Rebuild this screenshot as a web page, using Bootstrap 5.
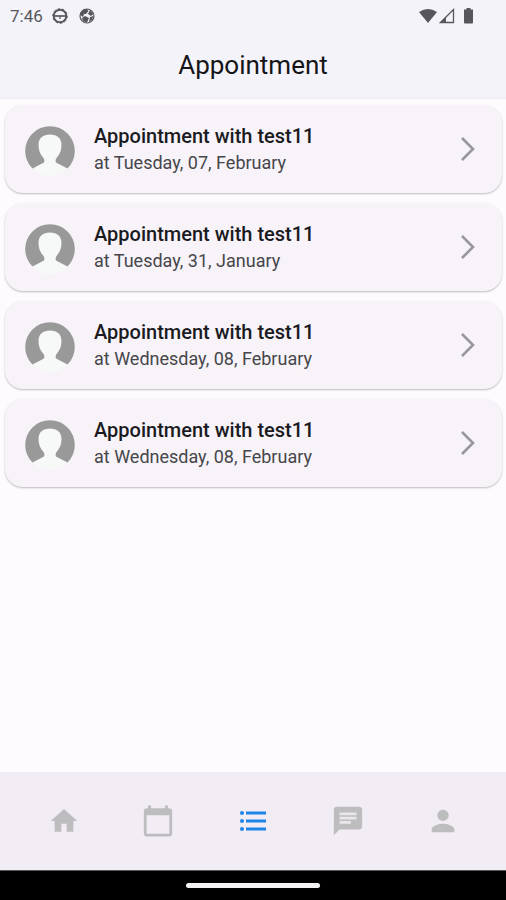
<!DOCTYPE html>
<html lang="en">
<head>
<meta charset="utf-8">
<meta name="viewport" content="width=device-width, initial-scale=1">
<title>Appointment</title>
<link href="https://cdn.jsdelivr.net/npm/bootstrap@5.3.0/dist/css/bootstrap.min.css" rel="stylesheet">
<style>
body { font-family: Roboto, "Liberation Sans", sans-serif; background: #fefbff; color: #1b1b1f; }
svg { display: block; flex: none; }
.app-header { background: #f4f3f9; border-bottom: 1px solid #f0edf2; }
.status-bar { height: 32px; padding: 0 31px 0 10px; color: #57575b; font-size: 17px; line-height: 32px; }
.app-title { font-size: 26px; line-height: 66px; font-weight: 400; color: #151518; }
.appointment-list { padding: 6px 4px 0 5px; gap: 10px; }
.appointment { min-height: 88px; padding: 0 24px 0 20px; gap: 19px; border-radius: 18px; background: #f7f3f9; color: #1b1b1f; box-shadow: 0 1px 2px rgba(0, 0, 0, .25); }
.appointment-name { font-size: 20px; line-height: 28px; font-weight: 500; }
.appointment-date { font-size: 18px; line-height: 26px; color: #46464a; }
.tab-bar { background: #f2edf4; height: 98px; padding: 0 16px 0 18px; }
.tab-bar a { color: #bdbdbf; }
.tab-bar a.active { color: #1d84ea; }
.gesture-bar { height: 30px; background: #000; border-top: 1px solid #58575a; }
.gesture-handle { width: 134px; height: 5px; border-radius: 3px; background: #f3f1f2; }
</style>
<script src="https://cdn.jsdelivr.net/npm/bootstrap@5.3.0/dist/js/bootstrap.bundle.min.js" defer></script>
</head>
<body class="d-flex flex-column min-vh-100">
<svg class="d-none" aria-hidden="true">
  <symbol id="avatar" viewBox="0 0 50 50">
    <path d="M7 42L19 34H31L43 42Q35 50 25 50Q15 50 7 42Z" fill="#f7f8f8"/>
    <ellipse cx="25" cy="22" rx="12" ry="17" fill="#f7f8f8"/>
    <path d="M7.500 42.500A24.800 24.800 0 1 1 42.500 42.500L31 36.500Q30 34 31.500 32C35 28 36.500 24 36.500 19C36.500 12 32 8.500 25 8.500S13.500 12 13.500 19C13.500 24 15 28 18.500 32Q20 34 19 36.500Z" fill="#999"/>
  </symbol>
  <symbol id="chevron" viewBox="0 0 16 26"><path d="M2 2L13 13L2 24" fill="none" stroke="#99979c" stroke-width="2.600"/></symbol>
</svg>
<header class="app-header">
  <div class="status-bar d-flex align-items-center">
    <div class="d-flex align-items-center gap-2">
      <span>7:46</span>
      <svg width="18" height="18" viewBox="0 0 18 18" fill="none" stroke="currentColor"><circle cx="9" cy="9" r="6.300" stroke-width="1.900"/><circle cx="9" cy="9" r="7.400" stroke-width=".8" stroke-dasharray="2.300 2.300"/><path d="M3 9H15" stroke-width="1.700"/><path d="M9 9V12" stroke-width="1.200"/></svg>
      <svg width="20" height="18" viewBox="0 0 20 18"><circle cx="10" cy="9" r="7" fill="#f4f3f9" stroke="currentColor" stroke-width="1.200"/><path d="M10 2L11.500 4L9 7L7 7L6 10L3 8V6L7 2ZM13 3L16.500 7L14 9L11 7ZM5 11L8 9L12 11L10 15.500L6 14ZM13 10L16.500 9L15 13L12 15Z" fill="currentColor"/></svg>
    </div>
    <div class="d-flex align-items-center ms-auto">
      <svg width="20" height="16" viewBox="0 0 20 16" fill="currentColor"><path d="M0 4Q9-2 18 4L9 15Z"/></svg>
      <svg width="16" height="16" viewBox="0 0 16 16"><path d="M1.500 14.500H14.500V1.500Z" fill="none" stroke="currentColor" stroke-width="1.300"/><path d="M1 15L7 9V15Z" fill="currentColor"/></svg>
      <svg class="ms-2" width="12" height="16" viewBox="0 0 12 16" fill="currentColor"><path d="M3.500 0H7.500V1.500H10V14.500Q10 15.500 9 15.500H2Q1 15.500 1 14.500V1.500H3.500Z"/></svg>
    </div>
  </div>
  <h1 class="app-title text-center mb-0">Appointment</h1>
</header>
<main class="appointment-list d-flex flex-column flex-grow-1">
  <a href="#" class="appointment d-flex align-items-center text-decoration-none">
    <svg class="mt-1" width="50" height="50" aria-hidden="true"><use href="#avatar"/></svg>
    <div class="flex-grow-1"><div class="appointment-name">Appointment with test11</div><div class="appointment-date">at Tuesday, 07, February</div></div>
    <svg width="20" height="26" aria-hidden="true"><use href="#chevron"/></svg>
  </a>
  <a href="#" class="appointment d-flex align-items-center text-decoration-none">
    <svg class="mt-1" width="50" height="50" aria-hidden="true"><use href="#avatar"/></svg>
    <div class="flex-grow-1"><div class="appointment-name">Appointment with test11</div><div class="appointment-date">at Tuesday, 31, January</div></div>
    <svg width="20" height="26" aria-hidden="true"><use href="#chevron"/></svg>
  </a>
  <a href="#" class="appointment d-flex align-items-center text-decoration-none">
    <svg class="mt-1" width="50" height="50" aria-hidden="true"><use href="#avatar"/></svg>
    <div class="flex-grow-1"><div class="appointment-name">Appointment with test11</div><div class="appointment-date">at Wednesday, 08, February</div></div>
    <svg width="20" height="26" aria-hidden="true"><use href="#chevron"/></svg>
  </a>
  <a href="#" class="appointment d-flex align-items-center text-decoration-none">
    <svg class="mt-1" width="50" height="50" aria-hidden="true"><use href="#avatar"/></svg>
    <div class="flex-grow-1"><div class="appointment-name">Appointment with test11</div><div class="appointment-date">at Wednesday, 08, February</div></div>
    <svg width="20" height="26" aria-hidden="true"><use href="#chevron"/></svg>
  </a>
</main>
<nav class="tab-bar d-flex align-items-center" aria-label="Main">
  <a href="#" class="flex-fill d-flex justify-content-center" aria-label="Home"><svg width="32" height="32" viewBox="0 0 24 24" fill="currentColor"><path d="M10 20v-6h4v6h5v-8h3L12 3 2 12h3v8z"/></svg></a>
  <a href="#" class="flex-fill d-flex justify-content-center" aria-label="Calendar"><svg width="34" height="34" viewBox="0 0 24 24" fill="currentColor"><path d="M20 3h-1V1h-2v2H7V1H5v2H4c-1.100 0-2 .9-2 2v16c0 1.100.9 2 2 2h16c1.100 0 2-.9 2-2V5c0-1.100-.9-2-2-2zm0 18H4V8h16v13z"/></svg></a>
  <a href="#" class="active flex-fill d-flex justify-content-center" aria-label="Appointments" aria-current="page"><svg width="34" height="34" viewBox="0 0 34 34" fill="currentColor"><circle cx="6" cy="9" r="2"/><circle cx="6" cy="17" r="2"/><circle cx="6" cy="25" r="2"/><path d="M10 7.500h20v3H10zM10 15.500h20v3H10zM10 23.500h20v3H10z"/></svg></a>
  <a href="#" class="flex-fill d-flex justify-content-center" aria-label="Messages"><svg width="34" height="34" viewBox="0 0 24 24" fill="currentColor"><path d="M20 2H4c-1.100 0-1.990.9-1.990 2L2 22l4-4h14c1.100 0 2-.9 2-2V4c0-1.100-.9-2-2-2z"/><path d="M6 6h12v2H6zM6 9h12v2H6zM6 12h8v2H6z" fill="#eae6ec"/></svg></a>
  <a href="#" class="flex-fill d-flex justify-content-center" aria-label="Profile"><svg width="34" height="34" viewBox="0 0 24 24" fill="currentColor"><path d="M12 12c2.210 0 4-1.790 4-4s-1.790-4-4-4-4 1.790-4 4 1.790 4 4 4zm0 2c-2.670 0-8 1.340-8 4v2h16v-2c0-2.660-5.330-4-8-4z"/></svg></a>
</nav>
<footer class="gesture-bar d-flex align-items-center justify-content-center"><div class="gesture-handle"></div></footer>
</body>
</html>
